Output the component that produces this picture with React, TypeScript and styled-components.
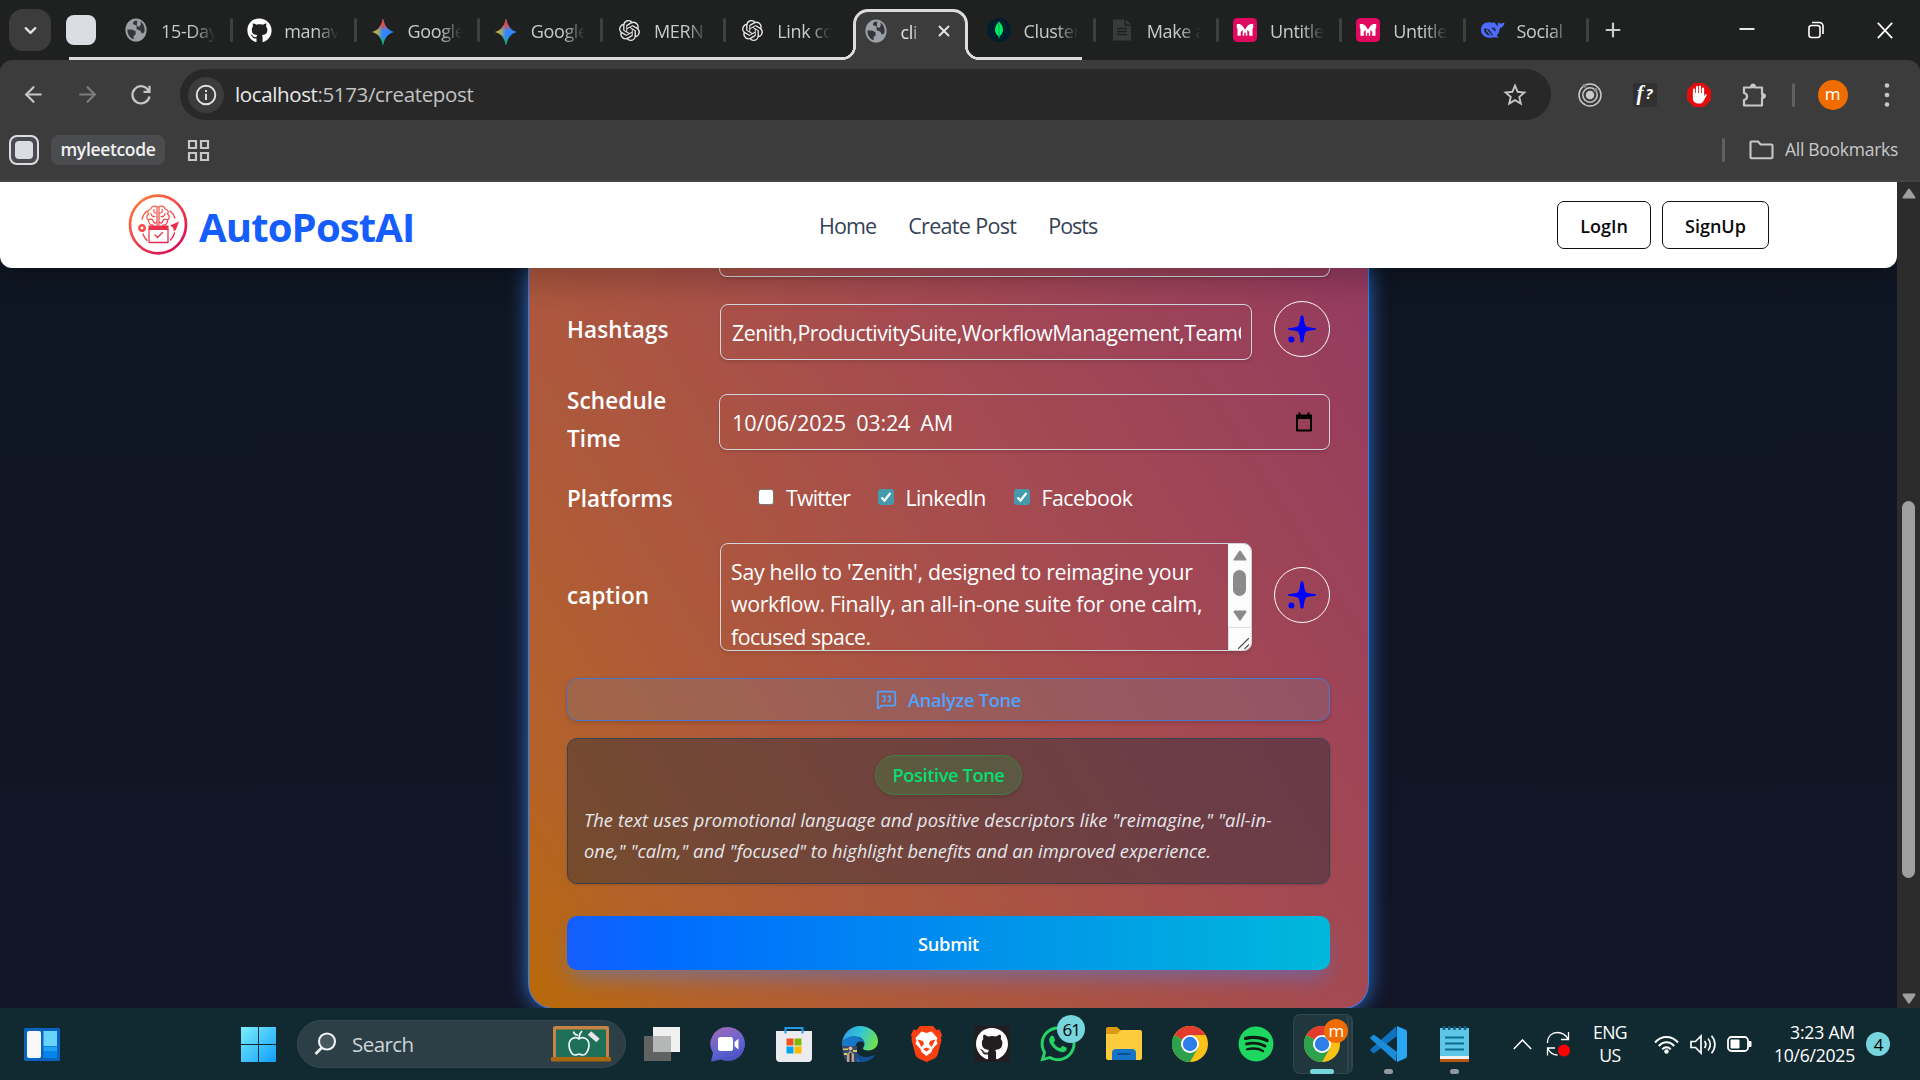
import React from "react";
import styled, { createGlobalStyle, css } from "styled-components";
import { FaGithub, FaWhatsapp, FaSpotify } from "react-icons/fa";
import { SiOpenai } from "react-icons/si";
import { MdStarOutline } from "react-icons/md";
import { ArrowLeft, ArrowRight, X, Plus, ChevronDown, MessageSquareQuote } from "lucide-react";

const Global = createGlobalStyle`
  * { box-sizing: border-box; }
  body { margin: 0; background: #101625; overflow: hidden; font-family: "Open Sans", "Noto Sans", sans-serif; }
  svg { display: block; flex: none; }
`;

const Text = styled.span<{ $size?: number; $weight?: number; $track?: number; $color?: string }>`
  font-size: ${(p) => p.$size ?? 18}px;
  font-weight: ${(p) => p.$weight ?? 400};
  letter-spacing: ${(p) => p.$track ?? 0}px;
  color: ${(p) => p.$color ?? "inherit"};
  white-space: nowrap;
`;

const Screen = styled.div`
  width: 1920px;
  height: 1080px;
  display: flex;
  flex-direction: column;
  overflow: hidden;
`;

/* ---------- browser chrome ---------- */

const TabStrip = styled.div`
  height: 60px;
  flex: none;
  display: flex;
  align-items: center;
  padding-left: 9px;
  background: linear-gradient(#dcdce0, #dcdce0) 69px 57px / 1013px 3px no-repeat, #1f2120;
  color: #c9cacb;
`;

const TabSearch = styled.div`
  width: 42px;
  height: 42px;
  border-radius: 14px;
  background: #3c3c3c;
  color: #e3e3e3;
  display: grid;
  place-items: center;
`;

const GroupChip = styled.div`
  width: 30px;
  height: 30px;
  margin: 0 12px 0 15px;
  border-radius: 8px;
  background: #dcdde2;
`;

const TabCell = styled.div<{ $sep?: boolean }>`
  width: 123.25px;
  height: 60px;
  flex: none;
  position: relative;
  display: flex;
  align-items: center;
  padding-left: 16px;
  gap: 13px;
  ${(p) =>
    p.$sep &&
    css`
      &::after {
        content: "";
        position: absolute;
        right: -2px;
        top: 18px;
        width: 3px;
        height: 24px;
        border-radius: 2px;
        background: #3f4040;
      }
    `}
`;

const TabIcon = styled.div`
  width: 24px;
  height: 24px;
  flex: none;
  display: grid;
  place-items: center;
`;

const TabTitle = styled.div<{ $w?: number }>`
  width: ${(p) => p.$w ?? 54}px;
  overflow: hidden;
  white-space: nowrap;
  font-size: 18px;
  letter-spacing: -0.35px;
  padding-top: 2px;
  mask-image: linear-gradient(to right, #000 60%, transparent 100%);
`;

const flare = css`
  content: "";
  position: absolute;
  bottom: 0;
  width: 14px;
  height: 14px;
`;

const ActiveTab = styled.div`
  width: 115px;
  height: 51px;
  flex: none;
  align-self: flex-end;
  margin: 0 3px 0 5px;
  position: relative;
  display: flex;
  align-items: center;
  padding: 0 0 11px 8px;
  gap: 13px;
  background: #3c3c3c;
  border: 3px solid #dcdce0;
  border-bottom: 0;
  border-radius: 15px 15px 0 0;
  color: #e3e3e3;
  &::before {
    ${flare}
    left: -14px;
    background: radial-gradient(circle at 0 0, transparent 11px, #dcdce0 11.5px 13.8px, #3c3c3c 14.2px);
  }
  &::after {
    ${flare}
    right: -14px;
    background: radial-gradient(circle at 100% 0, transparent 11px, #dcdce0 11.5px 13.8px, #3c3c3c 14.2px);
  }
`;

const Spacer = styled.div<{ $w?: number }>`
  ${(p) => (p.$w ? `width: ${p.$w}px; flex: none;` : "flex: 1;")}
`;

const Slot = styled.div<{ $w: number }>`
  width: ${(p) => p.$w}px;
  flex: none;
  display: grid;
  place-items: center;
`;

const ToolbarBack = styled.div`
  background: #1f2120;
  flex: none;
`;

const ToolbarPanel = styled.div`
  height: 122px;
  background: #3c3c3c;
  border-radius: 12px 12px 0 0;
  border-bottom: 2px solid #464343;
`;

const Toolbar = styled.div`
  height: 69px;
  display: flex;
  align-items: center;
  color: #c7c7c7;
  padding-left: 6px;
`;

const Omnibox = styled.div`
  width: 1371px;
  height: 51px;
  margin-left: 12px;
  border-radius: 26px;
  background: #282828;
  display: flex;
  align-items: center;
  padding: 0 22px 0 8px;
`;

const Address = styled.div`
  padding-bottom: 2px;
`;

const InfoBadge = styled.div`
  width: 36px;
  height: 36px;
  margin-right: 11px;
  border-radius: 50%;
  background: #3c3c3c;
  display: grid;
  place-items: center;
`;

const VBar = styled.div`
  width: 3px;
  height: 24px;
  border-radius: 2px;
  background: #5f6060;
`;

const FnBadge = styled.div`
  width: 24px;
  height: 24px;
  border-radius: 3px;
  background: #303030;
  color: #fff;
  display: flex;
  align-items: center;
  justify-content: center;
  gap: 2px;
  font: italic 700 21px/1 "Liberation Serif", serif;
  padding-bottom: 2px;
  & > small {
    font: italic 700 15px/1 "Open Sans", sans-serif;
  }
`;

const Avatar = styled.div<{ $d: number }>`
  width: ${(p) => p.$d}px;
  height: ${(p) => p.$d}px;
  border-radius: 50%;
  background: #ef6c00;
  color: #fff;
  display: flex;
  align-items: center;
  justify-content: center;
  font-size: 17px;
  line-height: 1;
  padding-bottom: 2px;
`;

const Bookmarks = styled.div`
  height: 42px;
  display: flex;
  align-items: center;
  padding: 0 22px 0 9px;
`;

const BookmarkSquare = styled.div`
  width: 30px;
  height: 30px;
  border: 2px solid #dcdde2;
  border-radius: 8px;
  background: #4a4c4f;
  display: grid;
  place-items: center;
  &::after {
    content: "";
    width: 18px;
    height: 18px;
    border-radius: 4px;
    background: #dcdde2;
  }
`;

const BookmarkChip = styled.div`
  width: 114px;
  height: 30px;
  margin: 0 22px 0 12px;
  border-radius: 8px;
  background: #4a4c4f;
  display: flex;
  align-items: center;
  justify-content: center;
  padding-bottom: 2px;
`;

/* ---------- web page ---------- */

const Page = styled.div`
  height: 826px;
  flex: none;
  display: flex;
  background: linear-gradient(#0f1623, #121627);
`;

const Viewport = styled.div`
  width: 1897px;
  height: 826px;
  overflow: hidden;
`;

const Header = styled.header`
  height: 86px;
  display: flex;
  align-items: center;
  background: #fff;
  border-radius: 0 0 12px 12px;
  position: relative;
  z-index: 1;
  box-shadow: 0 10px 30px 4px rgba(0, 0, 0, 0.2);
  padding: 0 128px;
`;

const Brand = styled.div`
  width: 691px;
  display: flex;
  align-items: center;
  gap: 11px;
  & > span {
    padding-top: 3px;
  }
`;

const Nav = styled.nav`
  flex: 1;
  display: flex;
  gap: 32px;
  color: #364153;
  padding-top: 1px;
`;

const AuthButton = styled.button<{ $w: number }>`
  width: ${(p) => p.$w}px;
  height: 48px;
  margin-left: 11px;
  padding: 2px 0 0;
  border: 1.5px solid #101010;
  border-radius: 7px;
  background: #fff;
  color: #0a0a0a;
  font: 600 18px "Open Sans", sans-serif;
`;

const Card = styled.div`
  width: 841px;
  height: 741px;
  margin-left: 528px;
  padding: 0 38px;
  border: 1px solid #2b7fff;
  border-top: 0;
  border-radius: 0 0 25px 25px;
  background: linear-gradient(to top right, #b96a08, #b4622a 10%, #ae5a3a 22%, #a54b50 47%, #993f5c 70%, #872f6b) left bottom / 100% 1350px no-repeat;
  box-shadow: 0 0 20px rgba(59, 140, 255, 0.75);
  color: #fff;
  display: flex;
  flex-direction: column;
`;

const fieldBox = css`
  border: 1px solid #d1d5dc;
  border-radius: 8px;
  box-shadow: 0 2px 3px rgba(0, 0, 0, 0.12);
`;

const FieldEnd = styled.div`
  ${fieldBox}
  height: 9px;
  margin-left: 152px;
  border-top: 0;
  border-radius: 0 0 8px 8px;
`;

const Row = styled.div<{ $h: number; $gap: number }>`
  height: ${(p) => p.$h}px;
  margin-top: ${(p) => p.$gap}px;
  flex: none;
  display: flex;
  align-items: center;
`;

const Label = styled.label<{ $track?: number }>`
  width: 153px;
  flex: none;
  padding-top: 2px;
  font-size: 22.5px;
  font-weight: 600;
  line-height: 38px;
  letter-spacing: ${(p) => p.$track ?? 0.12}px;
`;

const Input = styled.div<{ $wide?: boolean }>`
  ${fieldBox}
  width: ${(p) => (p.$wide ? 612 : 532)}px;
  margin-left: ${(p) => (p.$wide ? -1 : 0)}px;
  height: 56px;
  margin-top: 6px;
  padding: 0 ${(p) => (p.$wide ? 16 : 10)}px 0 ${(p) => (p.$wide ? 12 : 11)}px;
  display: flex;
  align-items: center;
  gap: 10px;
`;

const Clip = styled.div`
  width: 509px;
  overflow: hidden;
  white-space: nowrap;
`;

const SparkButton = styled.div`
  width: 56px;
  height: 56px;
  margin-left: 22px;
  border: 1px solid #fff;
  border-radius: 50%;
  display: grid;
  place-items: center;
`;

const Check = styled.span<{ $on?: boolean }>`
  width: 16px;
  height: 16px;
  border-radius: 3px;
  display: grid;
  place-items: center;
  background: ${(p) => (p.$on ? "#459aac" : "#fff")};
  border: ${(p) => (p.$on ? "0" : "1px solid #767676")};
`;

const Option = styled.div<{ $w: number }>`
  width: ${(p) => p.$w}px;
  display: flex;
  align-items: center;
  gap: 12px;
  padding-bottom: 2px;
`;

const TextArea = styled.div`
  ${fieldBox}
  width: 532px;
  height: 108px;
  margin-top: 4px;
  display: flex;
  overflow: hidden;
`;

const Lines = styled.div`
  flex: 1;
  padding: 12px 0 0 10px;
  display: flex;
  flex-direction: column;
  line-height: 32.4px;
`;

const Rail = styled.div`
  width: 23px;
  background: #fcfcfc;
  display: flex;
  flex-direction: column;
  align-items: center;
  padding-top: 6px;
`;

const RailThumb = styled.div`
  width: 13px;
  height: 26px;
  margin: 9px 0 14px;
  border-radius: 7px;
  background: #8b8b8b;
`;

const Grip = styled.div`
  width: 23px;
  flex: 1;
  margin-top: 6px;
  border-top: 1px solid #dcdcdc;
  border-left: 1px solid #dcdcdc;
  display: flex;
  justify-content: flex-end;
  align-items: flex-end;
  padding: 0 2px 1px 0;
`;

const AnalyzeButton = styled.div`
  height: 43px;
  margin-top: 29px;
  flex: none;
  border: 1px solid #4a76cc;
  border-radius: 11px;
  background: rgba(120, 122, 140, 0.28);
  box-shadow: 0 2px 4px rgba(0, 0, 0, 0.15);
  color: #51a2ff;
  display: flex;
  align-items: center;
  justify-content: center;
  gap: 11px;
`;

const ToneBox = styled.div`
  height: 146px;
  margin-top: 17px;
  flex: none;
  padding: 16px;
  border: 1px solid #39424f;
  border-radius: 10px;
  background: rgba(30, 41, 57, 0.41);
  box-shadow: 0 1px 3px rgba(0, 0, 0, 0.15);
  display: flex;
  flex-direction: column;
`;

const ToneBadge = styled.div`
  width: 147px;
  height: 40px;
  margin-bottom: 9px;
  align-self: center;
  flex: none;
  border: 1px solid #3d7f45;
  border-radius: 20px;
  background: rgba(40, 160, 70, 0.26);
  box-shadow: 0 2px 4px rgba(0, 0, 0, 0.12);
  color: #05df72;
  display: flex;
  align-items: center;
  justify-content: center;
  padding-bottom: 2px;
`;

const ToneLine = styled.div<{ $track: number }>`
  font-size: 18.3px;
  font-style: italic;
  line-height: 31px;
  color: #e5e7eb;
  white-space: nowrap;
  letter-spacing: ${(p) => p.$track}px;
`;

const Submit = styled.div`
  height: 54px;
  margin-top: 32px;
  flex: none;
  border-radius: 10px;
  background: linear-gradient(to right, #155dfc, #006cff 13%, #0080f5 35%, #0094ea 58%, #00a6e3 78%, #00b8db);
  box-shadow: 0 12px 20px -4px rgba(60, 130, 255, 0.42);
  display: flex;
  align-items: center;
  justify-content: center;
`;

const PageScroll = styled.div`
  width: 23px;
  background: #2c2c2c;
  display: flex;
  flex-direction: column;
  align-items: center;
  padding: 6px 0 4px;
`;

const PageThumb = styled.div`
  width: 13px;
  height: 377px;
  margin: 302px 0 auto;
  border-radius: 7px;
  background: #9f9f9f;
`;

/* ---------- taskbar ---------- */

const Taskbar = styled.div`
  height: 72px;
  flex: none;
  display: flex;
  align-items: center;
  background: #112a31;
  color: #fff;
`;

const SearchPill = styled.div`
  width: 329px;
  height: 48px;
  margin: 0 3px 0 18px;
  border-radius: 24px;
  border: 1px solid #35474e;
  background: #2c3f47;
  display: flex;
  align-items: center;
  padding: 0 14px 0 16px;
`;

const TaskItem = styled.div`
  width: 66.05px;
  height: 72px;
  flex: none;
  position: relative;
  display: grid;
  place-items: center;
`;

const ActivePlate = styled.div`
  width: 60px;
  height: 60px;
  position: absolute;
  left: 4px;
  top: 6px;
  border-radius: 7px;
  border: 1px solid #30464c;
  border-right: 6px double #30464c;
  background: #21373e;
`;

const Running = styled.div<{ $on?: boolean }>`
  position: absolute;
  bottom: 6px;
  left: 50%;
  width: ${(p) => (p.$on ? 24 : 9)}px;
  height: 5px;
  margin-left: ${(p) => (p.$on ? -12 : -5)}px;
  border-radius: 3px;
  background: ${(p) => (p.$on ? "#76d5dd" : "#90999c")};
`;

const Icon = styled.div`
  position: relative;
`;

const Count = styled.div<{ $d: number }>`
  width: ${(p) => p.$d}px;
  height: ${(p) => p.$d}px;
  border-radius: 50%;
  background: #76d5dd;
  color: #000;
  display: flex;
  align-items: center;
  justify-content: center;
  font-size: 17px;
  letter-spacing: -1px;
`;

const Badge = styled.div<{ $top: number; $right: number }>`
  position: absolute;
  top: ${(p) => p.$top}px;
  right: ${(p) => p.$right}px;
`;

const Stack = styled.div<{ $right?: boolean; $w: number }>`
  width: ${(p) => p.$w}px;
  display: flex;
  flex-direction: column;
  align-items: ${(p) => (p.$right ? "flex-end" : "center")};
  line-height: 23px;
`;

/* ---------- drawings ---------- */

const Globe = () => (
  <svg width="22" height="24" viewBox="0 0 22 22" preserveAspectRatio="none">
    <circle cx="11" cy="11" r="10.6" fill="#9aa0a6" />
    <path d="M2.400 10.500h4.600l3.600 1.600v3l-2 1.300v3C4.900 18.400 2.400 15 2.400 10.500Z" fill="#34363a" />
    <path d="M9.500 2.600c-1.200 1-2 2.200-1.200 3.200.8 1 2.700.3 3.300 1.500.5 1.200-.8 2.200.3 3.200 1 .8 2 .2 3.200 1 1.200 1 .8 2.600 2.300 2.600 1 0 1.900-1 2.200-2.200C20 7.500 18 4.500 15 3.200l1 2.400-1.800 2.600-2.400-1.200.6-4.400c-1-.2-2-.2-2.900 0Z" fill="#34363a" />
  </svg>
);

const Gemini = () => (
  <svg width="24" height="28" viewBox="0 0 24 24" preserveAspectRatio="none">
    <defs>
      <linearGradient id="gem" x1="0" x2="1" y1=".4" y2=".5">
        <stop offset="0" stopColor="#fbbc04" />
        <stop offset=".35" stopColor="#7fa58c" />
        <stop offset=".5" stopColor="#3186ff" />
      </linearGradient>
      <linearGradient id="gemV" x1="0" x2="0" y1="0" y2="1">
        <stop offset="0" stopColor="#ff4641" />
        <stop offset=".2" stopColor="#f4433c" />
        <stop offset=".45" stopColor="#f4433c" stopOpacity="0" />
        <stop offset=".65" stopColor="#0ebc5f" stopOpacity="0" />
        <stop offset=".9" stopColor="#0ebc5f" />
      </linearGradient>
    </defs>
    {["url(#gem)", "url(#gemV)"].map((f) => (
      <path key={f} fill={f} d="M12 .5c1.300 6.200 5 10.200 11 11.500-6 1.300-9.700 5.300-11 11.500C10.700 17.300 7 13.300 1 12 7 10.700 10.700 6.700 12 .5Z" />
    ))}
  </svg>
);

const Mongo = () => (
  <svg width="24" height="24" viewBox="0 0 24 24">
    <circle cx="12" cy="12" r="12" fill="#001e2b" />
    <path d="M12 3.500c2.500 2.800 4 5.200 4 8.300s-1.500 5-3.500 6.500l-.3 2.200h-.4l-.3-2.200C9.500 16.800 8 14.900 8 11.800s1.500-5.500 4-8.300Z" fill="#00ed64" />
    <path d="M12 5v14.500" stroke="#00a34a" strokeWidth=".8" />
  </svg>
);

const Doc = () => (
  <svg width="20" height="24" viewBox="0 0 20 24">
    <path d="M1 1.500h11.500V8H19v14.500H1Z" fill="#3a3b3c" />
    <path d="M14 1.500 19 6.500h-5Z" fill="#3a3b3c" />
    <path d="M5 10.500h10M5 13.500h10M5 16.500h10" stroke="#1f2120" strokeWidth="1.300" />
  </svg>
);

const Pink = () => (
  <svg width="24" height="24" viewBox="0 0 24 24">
    <rect width="24" height="24" rx="4.500" fill="#e0095f" />
    <path d="M4.500 17.800V11l-.7-1.200V6h2.700L9 7.200l3 4.300 3-4.300L17.500 6h2.700v3.800l-.7 1.200v6.800h-3.300v-4L14.300 12v5.800h-1.500v-3h-1.600v3H9.700V12l-1.900 1.800v4Z" fill="#fff" />
  </svg>
);

const Whale = () => (
  <svg width="25" height="20" viewBox="0 0 25 20">
    <path d="M1 10C1 5 4.500 2.300 9 2.300c1.700 0 2.600.4 3.500.9.700-1.300 1.700-1.200 2.600-.3 1 1.200 1.400 2.500 2.700 3.200.1-1.400-.1-2.600.6-4.100.8 1.100 1.600 1.800 2.800 1.500 1.300-.3 2-.9 3.300-.7-.4 3-2 4.700-4.600 5.300-.3 3.300-1.300 5.700-3.300 7.600.6.700 1.400 1 2.300 1.400-1.700.8-3.500.6-5-.2-1.600.8-3.300 1-5 .8C4.300 17.200 1 14.400 1 10Z" fill="#4d6bfe" />
    <path d="M4 8.500c2.600-.3 4.800.4 6.200 2.400 1 1.500 1.900 3 2.900 4-2.600.9-5.400.4-7-1.100C4.600 12.300 3.900 10.500 4 8.500Z" fill="#1f2120" />
    <path d="M6.500 9.500c1.100 2.200 2.400 4 4.600 5.300" stroke="#4d6bfe" strokeWidth="1.500" fill="none" />
    <path d="M11.800 8.300c1.800-.2 3.200 1 3.400 2.700" stroke="#1f2120" strokeWidth="1.300" fill="none" />
  </svg>
);

const Puzzle = () => (
  <svg width="26" height="26" viewBox="0 0 26 26">
    <path
      d="M3 5.500h7q0-2.500 2-2.500t2 2.500h7V12q2.500 0 2.500 2T21 16v7.500H3V18q3-.5 3-3.500T3 11Z"
      fill="none"
      stroke="#c7c7c7"
      strokeWidth="2.200"
      strokeLinejoin="round"
    />
    <circle cx="12" cy="4" r="2.400" fill="#c7c7c7" />
    <circle cx="22.500" cy="14" r="2.400" fill="#c7c7c7" />
  </svg>
);

const Spark = () => (
  <svg width="30" height="30" viewBox="0 0 30 30" fill="#00f">
    <path d="M15 1.500c1 0 1.500.7 1.600 1.500.6 5.300 1.300 8.200 2.600 9.300 1.100 1 4.100 1.400 8.300 1.700.9.100 1.500.4 1.500.9s-.6.900-1.500 1c-4.200.3-7.200.8-8.300 1.700-1.300 1-2 4-2.600 9.300-.1.900-.6 1.600-1.600 1.600s-1.500-.7-1.600-1.600c-.6-5.300-1.300-8.300-2.600-9.300-1.100-.9-4.100-1.400-8.300-1.700-.9-.1-1.500-.5-1.500-1s.6-.8 1.500-.9c4.200-.3 7.200-.7 8.300-1.700 1.300-1.100 2-4 2.600-9.300.1-.8.600-1.500 1.600-1.500Z" />
    <circle cx="4.400" cy="25.600" r="3" />
  </svg>
);

const BrandLogo = () => (
  <svg width="60" height="62" viewBox="0 0 60 62">
    <defs>
      <linearGradient id="brand" gradientUnits="userSpaceOnUse" x1="8" y1="6" x2="50" y2="56">
        <stop offset="0" stopColor="#ff7a3d" />
        <stop offset="1" stopColor="#dd0a55" />
      </linearGradient>
    </defs>
    <g fill="none" stroke="url(#brand)" strokeLinecap="round" strokeLinejoin="round">
      <ellipse cx="30" cy="30.500" rx="28" ry="28.800" strokeWidth="2.700" />
      <path strokeWidth="1.200" d="M29.500 13c-3-2-6.500-.5-6.500 2-3 .3-4 3.200-2.500 5-2.300 1.500-2.300 5 0 6.200-.5 3 2 5.300 4.800 4.800M30.500 13c3-2 6.500-.5 6.500 2 3 .3 4 3.200 2.500 5 2.300 1.500 2.300 5 0 6.200.5 3-2 5.300-4.800 4.800M29 13v18M31 13v18M26 15.500c-1 2 .5 3.500 2 3.500M34 15.500c1 2-.5 3.500-2 3.500M23 19.500c0 2.500 2.500 3.500 4 3M37 19.500c0 2.500-2.500 3.500-4 3M21 25.500c2-1 4 0 4.500 2s2 1.800 2.500 1M39 25.500c-2-1-4 0-4.500 2s-2 1.800-2.500 1" />
      <path strokeWidth="1.300" d="M21 35h19v13.500H21ZM27 41l2.500 2.500 5-5M19 17c-2.500 2-4.200 4.500-5 8M42 17c2.500 2 4 4 4.800 7M15 40c1 3 2.500 5 4 6.500M46.500 39c-.8 3-2 5-4 7" />
      <circle cx="14" cy="34" r="2.800" strokeWidth="2.400" strokeDasharray="1.500 .7" />
      <circle cx="14" cy="34" r="2.400" strokeWidth="1.300" />
    </g>
    <path d="M20.500 31.500h20v4.500h-20Z" fill="#e8304b" />
    <path d="m51 27.500-9 4 3 2 1 4 2-2Z" fill="#e8304b" />
  </svg>
);

const ChromeLogo = () => (
  <svg width="36" height="36" viewBox="0 0 36 36">
    <circle cx="18" cy="18" r="18" fill="#fbc116" />
    <path d="M18 18 2.400 9A18 18 0 0 1 33.600 9H18Z" fill="#e33b2e" />
    <path d="M2.400 9A18 18 0 0 0 18 36l7.800-13.500L18 18Z" fill="#2da14c" />
    <circle cx="18" cy="18" r="9" fill="#fff" />
    <circle cx="18" cy="18" r="7.200" fill="#2f7de9" />
  </svg>
);

const Store = () => (
  <svg width="36" height="36" viewBox="0 0 36 36">
    <path d="M0 5h36v27a4 4 0 0 1-4 4H4a4 4 0 0 1-4-4Z" fill="#ececee" />
    <path d="M9.500 7.500V2h17v5.500" fill="none" stroke="#1f9ce8" strokeWidth="2" />
    <path d="M10.500 12.500h7v7h-7Z" fill="#f25022" />
    <path d="M18.500 12.500h7v7h-7Z" fill="#7fba00" />
    <path d="M10.500 20.500h7v7h-7Z" fill="#00a4ef" />
    <path d="M18.500 20.500h7v7h-7Z" fill="#ffb900" />
  </svg>
);

const Edge = () => (
  <svg width="36" height="36" viewBox="0 0 36 36">
    <defs>
      <linearGradient id="edgeTop" x1="0" x2="1" y1=".2" y2=".5">
        <stop offset="0" stopColor="#2b9fe0" />
        <stop offset=".5" stopColor="#33c5d8" />
        <stop offset="1" stopColor="#6fe04e" />
      </linearGradient>
    </defs>
    <path d="M0 17C1 7 9 0 18 0c10 0 18 7 18 15 0 6-4.500 9.500-9.500 9.500-3.500 0-5.500-1-5.500-2.300 0-1 1.500-1.700 1.500-4.200 0-4-4-7.500-9.500-7.500C6.500 10.500 2 13 0 17Z" fill="url(#edgeTop)" />
    <path d="M0 17c2-4.500 7-7 12.500-6.500C18 11 22 14 22.500 18c-1-2-3-3-5-2.500-4 1-5.500 6-3 11 2.500 4.500 9 6.500 18.500 2.500C30 33.500 24.500 36 18 36 8 36-1 28 0 17Z" fill="#1777c9" />
    <path d="M14 25c2 6 11 8.500 19 4-3 4.500-9 7-15 7-3-3-5-7-4-11Z" fill="#124f93" />
    <path d="M0 20h15v16H5C2 32 0 27 0 20Z" fill="#35486e" />
    <path d="M1 22.500h5v1.500H1ZM11 24h4v2h-4ZM2 27h3v2H2Z" fill="#e0cf55" />
    <path d="M5 36v-8l3-3 4 3v8Z" fill="#b9a58c" />
    <path d="M7.500 27h2v9h-2Z" fill="#2b2430" />
    <circle cx="8.500" cy="22.500" r="2" fill="#e3b893" />
  </svg>
);

const Brave = () => (
  <svg width="31" height="36" viewBox="0 0 31 36">
    <path d="M9 0h13l3.500 4 3-.5L31 9l-1 3 .5 2-4 15q-1 2-3 3.500L15.500 36 7.500 32.500q-2-1.500-3-3.500L.5 14 1 12 0 9l2.500-5.500 3 .5Z" fill="#fa3f12" />
    <path d="m15.500 7 5-1.500 6 6.500-1 2.500 1 3-5 5.500-1 3-5 4-5-4-1-3-5-5.500 1-3-1-2.500 6-6.500Z" fill="#fff" />
    <path d="m6.500 13.500 5.500 1.500 1 3-2.500 3M24.500 13.500 19 15l-1 3 2.500 3M12 23l3.500-1.500L19 23l-3.500 2.500Z" fill="#fa3f12" />
  </svg>
);

const Chat = () => (
  <svg width="36" height="42" viewBox="0 0 36 42">
    <defs>
      <linearGradient id="chat" x1=".2" x2=".6" y1="0" y2="1">
        <stop offset="0" stopColor="#a06ab8" />
        <stop offset=".6" stopColor="#6264d0" />
        <stop offset="1" stopColor="#4a50c0" />
      </linearGradient>
    </defs>
    <path d="M18 4a17 17 0 1 1-7 32.500L2 38.500c-.8 0-1-.7-.7-1.300L3 30A17 17 0 0 1 18 4Z" fill="url(#chat)" />
    <rect x="8" y="14" width="15" height="14" rx="2.500" fill="#fff" />
    <path d="m24.500 19 4-3.200v10.700l-4-3.200Z" fill="#fff" />
  </svg>
);

const Folder = () => (
  <svg width="36" height="34" viewBox="0 0 36 34">
    <path d="M0 2a2 2 0 0 1 2-2h9l4 3.500L12 8H0Z" fill="#dd9a0c" />
    <path d="M0 7h11l4-4h19a2 2 0 0 1 2 2v26a2 2 0 0 1-2 2H2a2 2 0 0 1-2-2Z" fill="#fccb3e" />
    <path d="M6 33v-7a4 4 0 0 1 4-4h16a4 4 0 0 1 4 4v7Z" fill="#1573c8" />
    <path d="M11.500 27h13" stroke="#0a4c90" strokeWidth="2" />
  </svg>
);

const VsCode = () => (
  <svg width="37" height="36" viewBox="0 0 37 36">
    <path d="M27 10 4.500 27q-.8.500-1.500 0L.5 24.700q-.7-.8 0-1.500L26 .5Z" fill="#0f72bb" />
    <path d="M27 26 4.500 9Q3.700 8.500 3 9L.5 11.300q-.7.800 0 1.500L26 35.500Z" fill="#1c8bd8" />
    <path d="M27 0 35.500 3.800Q37 4.500 37 6v24q0 1.500-1.500 2.200L27 36Z" fill="#2aa7f2" />
  </svg>
);

const Notepad = () => (
  <svg width="29" height="36" viewBox="0 0 29 36">
    <path d="M0 2h29v29H0Z" fill="#5dc6e4" />
    <path d="M0 30h29v3H0Z" fill="#f1f1f1" />
    <path d="M0 33h29v3H0Z" fill="#b8560e" />
    <path d="M4 0v4M9.200 0v4M14.500 0v4M19.800 0v4M25 0v4" stroke="#0e5f86" strokeWidth="2.400" />
    <path d="M5 11.500h19M5 17.500h19M5 23.500h19" stroke="#0e6a93" strokeWidth="1.800" />
  </svg>
);

const Chalkboard = () => (
  <svg width="60" height="36" viewBox="0 0 60 36">
    <rect x="2" y="0" width="56" height="32" rx="2" fill="#c58345" />
    <rect x="5" y="3.500" width="50" height="28" fill="#1e6f58" />
    <rect x="0" y="31" width="60" height="4.500" rx="1" fill="#a9670f" />
    <path d="M28 13c-3-3-10-1-10 6 0 5 3 10 6 10 1.500 0 2.500-.8 4-.8s2.500.8 4 .8c3 0 6-5 6-10 0-7-7-9-10-6ZM28 12c0-3 1-5 3-7M27 9c-2 0-4-1-4.500-3.500" fill="none" stroke="#eef6f0" strokeWidth="1.700" />
    <path d="m38.500 7 8.500 7.500" stroke="#e8e4ea" strokeWidth="5" />
  </svg>
);

const Tri = ({ down, color, w = 14 }: { down?: boolean; color: string; w?: number }) => (
  <svg width={w} height={w * 0.8} viewBox="0 0 14 11" fill={color} stroke={color} strokeWidth="2" strokeLinejoin="round">
    <path d={down ? "M1.500 1.500h11L7 9.500Z" : "M1.500 9.500h11L7 1.500Z"} />
  </svg>
);

const tabs: { title: string; icon: React.ReactNode; sep: boolean }[] = [
  { title: "15-Day", icon: <Globe />, sep: true },
  { title: "manav", icon: <FaGithub size={25} color="#fff" />, sep: true },
  { title: "Google", icon: <Gemini />, sep: true },
  { title: "Google", icon: <Gemini />, sep: true },
  { title: "MERN", icon: <SiOpenai size={21} color="#e6e6e6" />, sep: true },
  { title: "Link co", icon: <SiOpenai size={21} color="#e6e6e6" />, sep: false },
];
const tabsAfter: typeof tabs = [
  { title: "Cluster", icon: <Mongo />, sep: true },
  { title: "Make a", icon: <Doc />, sep: true },
  { title: "Untitle", icon: <Pink />, sep: true },
  { title: "Untitle", icon: <Pink />, sep: true },
  { title: "Social |", icon: <Whale />, sep: true },
];

const Tab = ({ title, icon, sep }: (typeof tabs)[number]) => (
  <TabCell $sep={sep}>
    <TabIcon>{icon}</TabIcon>
    <TabTitle>{title}</TabTitle>
  </TabCell>
);

const CheckBox = ({ on }: { on?: boolean }) => (
  <Check $on={on}>
    {on && (
      <svg width="16" height="16" viewBox="0 0 16 16">
        <path d="m3.500 8.500 3 3 6-7.500" fill="none" stroke="#fff" strokeWidth="2.200" />
      </svg>
    )}
  </Check>
);

export default function App() {
  return (
    <Screen>
      <Global />
      <TabStrip>
        <TabSearch>
          <ChevronDown size={19} strokeWidth={2.8} />
        </TabSearch>
        <GroupChip />
        {tabs.map((t, i) => (
          <Tab key={i} {...t} />
        ))}
        <ActiveTab>
          <TabIcon>
            <Globe />
          </TabIcon>
          <TabTitle $w={19}>cli</TabTitle>
          <Slot $w={22}>
            <X size={18} strokeWidth={2.6} />
          </Slot>
        </ActiveTab>
        {tabsAfter.map((t, i) => (
          <Tab key={i} {...t} />
        ))}
        <Slot $w={53}>
          <Plus size={22} strokeWidth={2.4} />
        </Slot>
        <Spacer />
        <Slot $w={69}>
          <svg width="16" height="16" viewBox="0 0 16 16"><path d="M.5 7h15" stroke="#fff" strokeWidth="1.800" /></svg>
        </Slot>
        <Slot $w={69}>
          <svg width="16" height="18" viewBox="0 0 16 18" fill="none" stroke="#fff" strokeWidth="1.600">
            <rect x="1" y="4.500" width="11" height="12" rx="2.500" />
            <path d="M4 1.500h7.500a3.500 3.500 0 0 1 3.500 3.500V13" />
          </svg>
        </Slot>
        <Slot $w={69}>
          <svg width="16" height="17" viewBox="0 0 16 17"><path d="m.8.800 14.400 15.400M15.200.800.800 16.200" stroke="#fff" strokeWidth="1.700" /></svg>
        </Slot>
        <Spacer $w={1} />
      </TabStrip>

      <ToolbarBack>
        <ToolbarPanel>
          <Toolbar>
            <Slot $w={54}><ArrowLeft size={25} strokeWidth={2.1} /></Slot>
            <Slot $w={54}><ArrowRight size={25} strokeWidth={2.1} color="#7d7d7d" /></Slot>
            <Slot $w={54}>
              <svg width="22" height="22" viewBox="0 0 22 22" fill="none" stroke="#c7c7c7" strokeWidth="2.200">
                <path d="M18.500 6.500A8.600 8.600 0 1 0 19.500 12.500M19.500 1.800v6h-6" />
              </svg>
            </Slot>
            <Omnibox>
              <InfoBadge>
                <svg width="22" height="22" viewBox="0 0 22 22" fill="none" stroke="#e3e3e3" strokeWidth="1.900">
                  <circle cx="11" cy="11" r="9.300" />
                  <path d="M11 9.800V16M11 6v2" />
                </svg>
              </InfoBadge>
              <Address>
                <Text $size={20.5} $track={-0.38} $color="#e9e9e9">localhost</Text>
                <Text $size={20.5} $track={-0.36} $color="#c3c3c3">:5173/createpost</Text>
              </Address>
              <Spacer />
              <MdStarOutline size={28} color="#c7c7c7" />
            </Omnibox>
            <Spacer $w={12} />
            <Slot $w={54}>
              <svg width="24" height="24" viewBox="0 0 24 24" fill="none" stroke="#c9c9c9" strokeWidth="1.500">
                <circle cx="12" cy="12" r="11" />
                <circle cx="12" cy="12" r="7.200" />
                <circle cx="12" cy="12" r="3.500" fill="#c9c9c9" />
                <circle cx="6.500" cy="2.700" r="2" fill="#8a8a8a" stroke="none" />
                <circle cx="17.500" cy="7" r="2" fill="#8a8a8a" stroke="none" />
              </svg>
            </Slot>
            <Slot $w={55}><FnBadge>f<small>?</small></FnBadge></Slot>
            <Slot $w={53}>
              <svg width="24" height="24" viewBox="0 0 24 24">
                <path d="M7 0h10l7 7v10l-7 7H7l-7-7V7Z" fill="#e40d0d" />
                <path d="M7 12V6.500M10 11V4M13 11V3.500M16 12V5.500" stroke="#fff" strokeWidth="2.200" strokeLinecap="round" />
                <path d="M5.900 10h11.200v3l1.300-1.500c.7-.6 1.700 0 1.200.9l-3.300 5.800c-.8 1.500-2 2.300-4 2.300-4 0-6.400-1.800-6.400-5Z" fill="#fff" />
              </svg>
            </Slot>
            <Slot $w={57}><Puzzle /></Slot>
            <Slot $w={22}><VBar /></Slot>
            <Slot $w={57}><Avatar $d={30}>m</Avatar></Slot>
            <Slot $w={52}>
              <svg width="6" height="26" viewBox="0 0 6 26" fill="#c7c7c7">
                <circle cx="3" cy="3.500" r="2.300" /><circle cx="3" cy="13" r="2.300" /><circle cx="3" cy="22.500" r="2.300" />
              </svg>
            </Slot>
          </Toolbar>
          <Bookmarks>
            <BookmarkSquare />
            <BookmarkChip>
              <Text $size={17.5} $weight={600} $track={-0.34} $color="#f0f0f0">myleetcode</Text>
            </BookmarkChip>
            <svg width="23" height="23" viewBox="0 0 23 23" fill="none" stroke="#c7c7c7" strokeWidth="2.200">
              <path d="M2 2h7v7H2ZM14 2h7v7h-7ZM2 14h7v7H2ZM14 14h7v7h-7Z" />
            </svg>
            <Spacer />
            <VBar />
            <Spacer $w={24} />
            <svg width="25" height="20" viewBox="0 0 25 20" fill="none" stroke="#c7c7c7" strokeWidth="2.100" strokeLinejoin="round">
              <path d="M1.500 17V2.500q0-1 1-1h6.500l2.700 3H22.500q1 0 1 1V17q0 1.300-1 1.300h-20q-1 0-1-1.300Z" />
            </svg>
            <Spacer $w={11} />
            <Address><Text $size={17.5} $track={-0.28} $color="#c9c9c9">All Bookmarks</Text></Address>
          </Bookmarks>
        </ToolbarPanel>
      </ToolbarBack>

      <Page>
        <Viewport>
          <Header>
            <Brand>
              <BrandLogo />
              <Text $size={40} $weight={700} $track={-0.85} $color="#155dfc">AutoPostAI</Text>
            </Brand>
            <Nav>
              <Text $size={21.5} $track={-0.9}>Home</Text>
              <Text $size={21.5} $track={-0.67}>Create Post</Text>
              <Text $size={21.5} $track={-1}>Posts</Text>
            </Nav>
            <AuthButton $w={94}>LogIn</AuthButton>
            <AuthButton $w={107}>SignUp</AuthButton>
          </Header>
          <Card>
            <FieldEnd />
            <Row $h={56} $gap={24}>
              <Label>Hashtags</Label>
              <Input>
                <Clip>
                  <Text $size={21.3} $track={-0.48}>Zenith,ProductivitySuite,WorkflowManagement,TeamCollaboration</Text>
                </Clip>
              </Input>
              <SparkButton><Spark /></SparkButton>
            </Row>
            <Row $h={76} $gap={24}>
              <Label>Schedule<br />Time</Label>
              <Input $wide>
                <Text $size={21.6} $track={-0.05}>10/06/2025</Text>
                <Text $size={21.6} $track={-0.2}>03:24</Text>
                <Text $size={21.6}>AM</Text>
                <Spacer />
                <svg width="18" height="20" viewBox="0 0 18 20">
                  <path d="M2 3.500h14V18.500H2Z" fill="none" stroke="#000" strokeWidth="2" strokeLinejoin="round" />
                  <path d="M1 3h16v4H1ZM3.500.500h2V4h-2ZM12.500.500h2V4h-2Z" />
                </svg>
              </Input>
            </Row>
            <Row $h={38} $gap={22}>
              <Label $track={-0.05}>Platforms</Label>
              <Spacer $w={38} />
              <Option $w={119.5}><CheckBox /><Text $size={21.3} $track={-0.75}>Twitter</Text></Option>
              <Option $w={136}><CheckBox on /><Text $size={21.3} $track={-0.56}>LinkedIn</Text></Option>
              <Option $w={140}><CheckBox on /><Text $size={21.3} $track={-0.48}>Facebook</Text></Option>
            </Row>
            <Row $h={108} $gap={24}>
              <Label>caption</Label>
              <TextArea>
                <Lines>
                  <Text $size={21.3} $track={-0.28}>Say hello to 'Zenith', designed to reimagine your</Text>
                  <Text $size={21.3} $track={-0.33}>workflow. Finally, an all-in-one suite for one calm,</Text>
                  <Text $size={21.3} $track={-0.5}>focused space.</Text>
                </Lines>
                <Rail>
                  <Tri color="#8b8b8b" />
                  <RailThumb />
                  <Tri down color="#8b8b8b" />
                  <Grip>
                    <svg width="11" height="11" viewBox="0 0 11 11" stroke="#555" strokeWidth="1.300">
                      <path d="M0 11 11 0M6.500 11 11 6.500" />
                    </svg>
                  </Grip>
                </Rail>
              </TextArea>
              <SparkButton><Spark /></SparkButton>
            </Row>
            <AnalyzeButton>
              <MessageSquareQuote size={21} strokeWidth={2} />
              <Text $size={18.3} $weight={600} $track={-0.32}>Analyze Tone</Text>
            </AnalyzeButton>
            <ToneBox>
              <ToneBadge><Text $size={18.3} $weight={600} $track={-0.42}>Positive Tone</Text></ToneBadge>
              <ToneLine $track={0.1}>The text uses promotional language and positive descriptors like "reimagine," "all-in-</ToneLine>
              <ToneLine $track={0.03}>one," "calm," and "focused" to highlight benefits and an improved experience.</ToneLine>
            </ToneBox>
            <Submit><Text $size={18.3} $weight={600} $track={-0.33}>Submit</Text></Submit>
          </Card>
        </Viewport>
        <PageScroll>
          <Tri color="#9f9f9f" />
          <PageThumb />
          <Tri down color="#9f9f9f" />
        </PageScroll>
      </Page>

      <Taskbar>
        <Spacer $w={24} />
        <svg width="36" height="33" viewBox="0 0 36 33">
          <rect width="36" height="33" rx="1.500" fill="#0b63bd" />
          <rect x="3" y="3" width="14" height="27" rx="2" fill="#f8f8f8" />
          <path d="M19.500 3H33v15H19.500Z" fill="#66d4fc" />
          <path d="M19.500 18.500H33v5H19.500Z" fill="#1ba4f8" />
          <path d="M19.500 24H33v6H19.500Z" fill="#0685ea" />
        </svg>
        <Spacer $w={181} />
        <svg width="35" height="35" viewBox="0 0 35 35">
          <defs>
            <linearGradient id="win" x1="0" y1="0" x2="1" y2="1">
              <stop offset="0" stopColor="#7beffc" /><stop offset="1" stopColor="#0e9dfb" />
            </linearGradient>
          </defs>
          <path d="M0 0h17v17H0ZM18 0h17v17H18ZM0 18h17v17H0ZM18 18h17v17H18Z" fill="url(#win)" />
        </svg>
        <Spacer $w={3} />
        <SearchPill>
          <svg width="23" height="24" viewBox="0 0 23 24" fill="none" stroke="#eef1f2" strokeWidth="2.100">
            <circle cx="13" cy="9.500" r="8" fill="#47585f" /><path d="M8 15.500 1.500 22" strokeWidth="2.600" />
          </svg>
          <Spacer $w={15} />
          <Text $size={20.5} $track={-0.55} $color="#cfd5d7">Search</Text>
          <Spacer />
          <Chalkboard />
        </SearchPill>
        <TaskItem>
          <svg width="36" height="34" viewBox="0 0 36 34">
            <path d="M0 9h27v25H0Z" fill="#616363" /><path d="M9 0h27v25H9Z" fill="#f0f0f0" /><path d="M9 9h18v16H9Z" fill="#b5b6b6" />
          </svg>
        </TaskItem>
        <TaskItem><Chat /></TaskItem>
        <TaskItem><Store /></TaskItem>
        <TaskItem><Edge /></TaskItem>
        <TaskItem><Brave /></TaskItem>
        <TaskItem>
          <svg width="36" height="36" viewBox="0 0 36 36"><rect width="36" height="36" fill="#211d20" /><svg x="1.500" y="1.500" width="33" height="33"><FaGithub size={33} color="#fff" /></svg></svg>
        </TaskItem>
        <TaskItem>
          <Icon>
            <FaWhatsapp size={40} color="#25d366" />
            <Badge $top={-9} $right={-7}><Count $d={28}>61</Count></Badge>
          </Icon>
        </TaskItem>
        <TaskItem><Folder /></TaskItem>
        <TaskItem><ChromeLogo /></TaskItem>
        <TaskItem>
          <FaSpotify size={36} color="#1ed760" style={{ background: "radial-gradient(#101b14 60%, transparent 61%)" }} />
        </TaskItem>
        <TaskItem>
          <ActivePlate />
          <Icon>
            <ChromeLogo />
            <Badge $top={-7} $right={-8}><Avatar $d={24}>m</Avatar></Badge>
          </Icon>
          <Running $on />
        </TaskItem>
        <TaskItem><VsCode /><Running /></TaskItem>
        <TaskItem><Notepad /><Running /></TaskItem>
        <Spacer />
        <svg width="19" height="11" viewBox="0 0 19 11" fill="none" stroke="#fff" strokeWidth="1.500"><path d="m.8 10 8.700-9 8.700 9" /></svg>
        <Spacer $w={14} />
        <svg width="25" height="26" viewBox="0 0 25 26" fill="none" stroke="#fff" strokeWidth="1.300">
          <path d="M1.500 12C1.500 5 6 1.500 11.500 1.500c4.500 0 8 2 10.500 6.500M22.500 1v7.500H15M1.500 24.500V17H9M1.800 17.500C4 22 7 24 11.500 24" />
          <circle cx="18" cy="19.500" r="6" fill="red" stroke="none" />
        </svg>
        <Spacer $w={15} />
        <Stack $w={48}>
          <Text $size={17.6} $track={-0.6}>ENG</Text>
          <Text $size={17.6} $track={-0.6}>US</Text>
        </Stack>
        <Spacer $w={20} />
        <svg width="25" height="19" viewBox="0 0 25 19" fill="none" stroke="#fff" strokeWidth="2">
          <path d="M1 7.500C7.500.200 17.500.200 24 7.500M4.800 11C9.300 6 15.700 6 20.200 11M8.300 14.300c2.400-2.700 6-2.700 8.400 0" />
          <circle cx="12.500" cy="16.500" r="2.200" fill="#fff" stroke="none" />
        </svg>
        <Spacer $w={11} />
        <svg width="26" height="21" viewBox="0 0 26 21" fill="none" stroke="#fff" strokeWidth="1.700">
          <path d="M1 7.500h4.500L11 2v17l-5.500-5.500H1ZM14.500 7c1.500 2 1.500 5 0 7M18 4.500c3 3.500 3 8.500 0 12M21.500 1.800c4.500 5 4.500 12.400 0 17.400" />
        </svg>
        <Spacer $w={11} />
        <svg width="25" height="16" viewBox="0 0 25 16">
          <rect x="1" y="1" width="20" height="14" rx="3.500" fill="none" stroke="#fff" strokeWidth="1.800" />
          <rect x="3.500" y="3.500" width="9" height="9" rx="1" fill="#fff" />
          <path d="M22 5h1.500a1 1 0 0 1 1 1v4a1 1 0 0 1-1 1H22Z" fill="#fff" />
        </svg>
        <Stack $right $w={103}>
          <Text $size={17.6} $track={-0.2}>3:23 AM</Text>
          <Text $size={17.6} $track={-0.25}>10/6/2025</Text>
        </Stack>
        <Spacer $w={11} />
        <Count $d={24}>4</Count>
        <Spacer $w={30} />
      </Taskbar>
    </Screen>
  );
}
